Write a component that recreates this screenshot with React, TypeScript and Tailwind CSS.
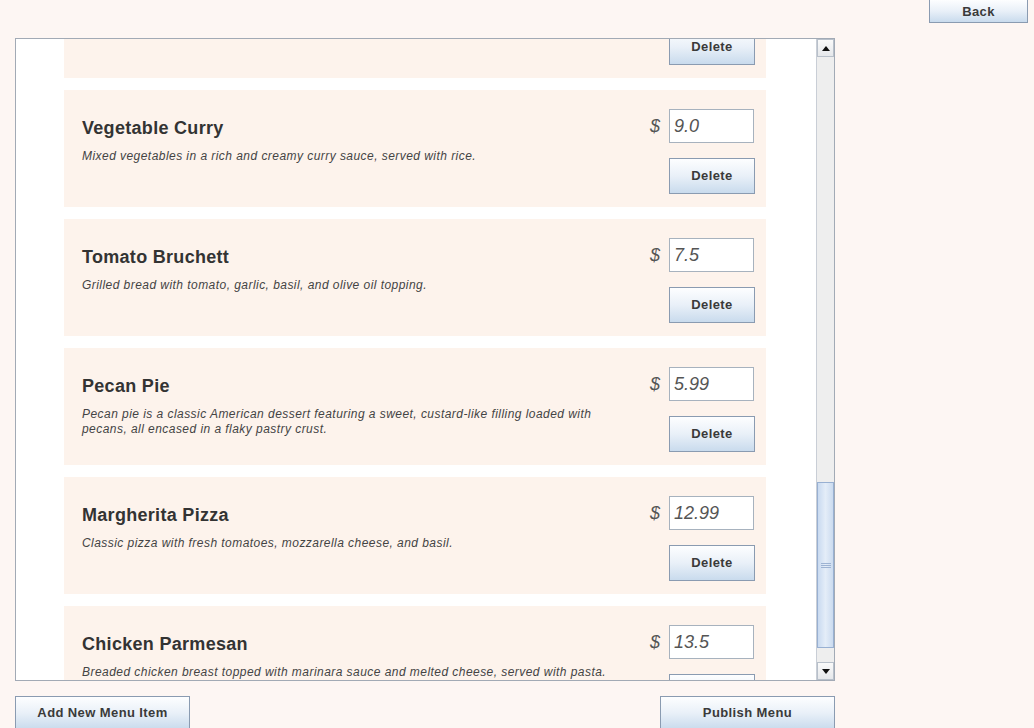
import React from "react";

type Item = { name: string; price: string; desc: string };

const items: Item[] = [
  { name: "", price: "", desc: "" },
  { name: "Vegetable Curry", price: "9.0", desc: "Mixed vegetables in a rich and creamy curry sauce, served with rice." },
  { name: "Tomato Bruchett", price: "7.5", desc: "Grilled bread with tomato, garlic, basil, and olive oil topping." },
  {
    name: "Pecan Pie",
    price: "5.99",
    desc: "Pecan pie is a classic American dessert featuring a sweet, custard-like filling loaded with pecans, all encased in a flaky pastry crust.",
  },
  { name: "Margherita Pizza", price: "12.99", desc: "Classic pizza with fresh tomatoes, mozzarella cheese, and basil." },
  {
    name: "Chicken Parmesan",
    price: "13.5",
    desc: "Breaded chicken breast topped with marinara sauce and melted cheese, served with pasta.",
  },
];

function MetalButton({ label, className }: { label: string; className: string }) {
  return (
    <button
      className={
        "flex items-center justify-center border border-[#8a9bb1] bg-gradient-to-b from-[#fdfeff] via-[#e9f0f8] to-[#c9dbed] text-[13px] font-bold tracking-[0.4px] text-[#3a3a3a] " +
        className
      }
    >
      {label}
    </button>
  );
}

function Card({ item, first }: { item: Item; first?: boolean }) {
  return (
    <div className={"flex h-[117px] w-[702px] shrink-0 bg-[#fdf3ec] pl-[18px] pr-[12px] " + (first ? "mt-[-78px]" : "")}>
      <div className="flex flex-1 flex-col pt-[28px]">
        <div className="h-[20px] text-[18px] font-bold leading-[20px] tracking-[0.3px] text-[#333333]">{item.name}</div>
        <div className="mt-[11px] max-w-[535px] text-[12px] italic leading-[15px] tracking-[0.45px] text-[#444444]">
          {item.desc}
        </div>
      </div>
      <div className="flex flex-col items-end pt-[19px]">
        <div className="flex items-center">
          <span className="mr-[9px] text-[18px] italic text-[#555555]">{item.price ? "$" : ""}</span>
          <div className="flex h-[34px] w-[85px] items-center border border-[#a7b2be] bg-white pl-[4px] text-[18px] italic text-[#555555]">
            {item.price}
          </div>
        </div>
        <MetalButton label="Delete" className="mt-[15px] mr-[-1px] h-[36px] w-[86px]" />
      </div>
    </div>
  );
}

function ArrowButton({ up }: { up?: boolean }) {
  return (
    <div className="flex h-[18px] w-full items-center justify-center border border-[#b8c0ca] bg-gradient-to-b from-[#fafafa] to-[#e6e8eb]">
      <svg width="8" height="5" viewBox="0 0 8 5">
        {up ? <polygon points="0,5 8,5 4,0" fill="#111" /> : <polygon points="0,0 8,0 4,5" fill="#111" />}
      </svg>
    </div>
  );
}

function Scrollbar() {
  return (
    <div className="flex w-[18px] flex-col border-l border-[#c9ced6] bg-[#eeeeee]">
      <ArrowButton up />
      <div className="h-[425px] shrink-0" />
      <div className="flex h-[166px] shrink-0 items-center justify-center border border-[#98b0d2] bg-gradient-to-r from-[#c9daf0] via-[#e4edf8] to-[#cbdbef]">
        <div className="h-[5px] w-[10px] bg-[repeating-linear-gradient(to_bottom,#9db3d3_0px,#9db3d3_1px,transparent_1px,transparent_2px)]" />
      </div>
      <div className="flex-1" />
      <ArrowButton />
    </div>
  );
}

export default function App() {
  return (
    <div className="h-[728px] w-[1034px] overflow-hidden bg-[#fdf6f3] font-['Liberation_Sans',Arial,sans-serif]">
      <div className="flex justify-end pr-[6px]">
        <MetalButton label="Back" className="h-[23px] w-[99px] border-t-0 pt-[1px]" />
      </div>
      <div className="ml-[15px] mt-[15px] flex h-[643px] w-[820px] border border-[#a2aab5]">
        <div className="flex-1 overflow-hidden bg-white">
          <div className="flex flex-col gap-[12px] pl-[48px]">
            {items.map((it, i) => (
              <Card key={i} item={it} first={i === 0} />
            ))}
          </div>
        </div>
        <Scrollbar />
      </div>
      <div className="ml-[15px] mt-[15px] flex w-[820px] justify-between">
        <MetalButton label="Add New Menu Item" className="h-[34px] w-[175px]" />
        <MetalButton label="Publish Menu" className="h-[34px] w-[175px]" />
      </div>
    </div>
  );
}
